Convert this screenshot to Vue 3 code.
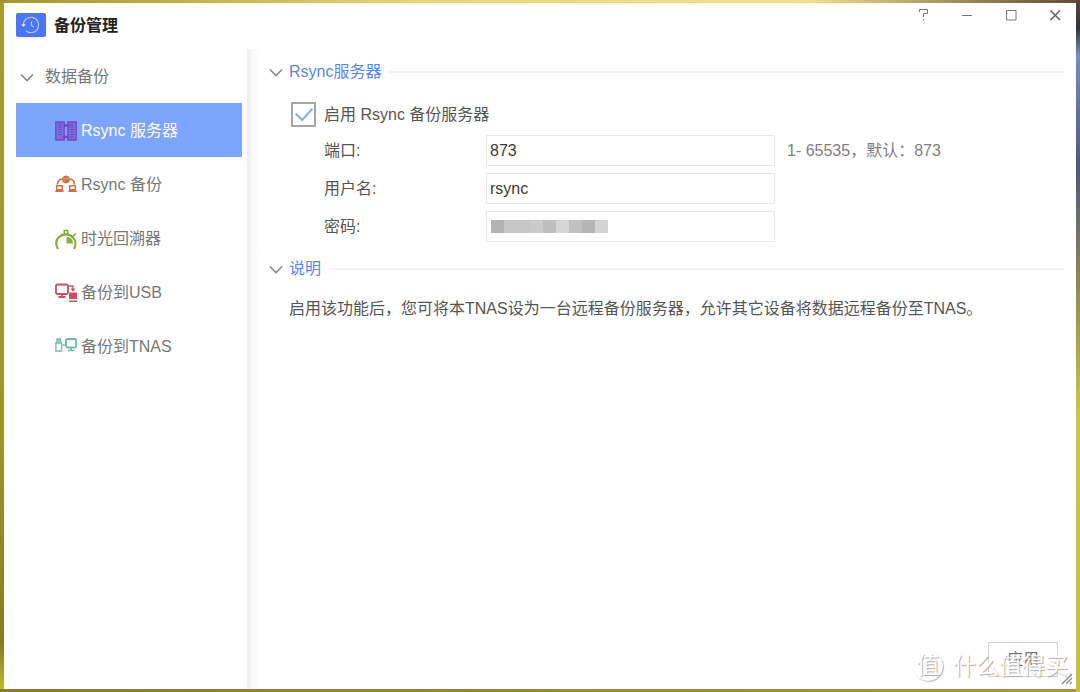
<script setup>
import { ref } from 'vue'

const items = [
  { id: 'server', label: 'Rsync 服务器' },
  { id: 'rsync', label: 'Rsync 备份' },
  { id: 'time', label: '时光回溯器' },
  { id: 'usb', label: '备份到USB' },
  { id: 'tnas', label: '备份到TNAS' },
]
const active = ref('server')
const enabled = ref(true)
const port = ref('873')
const user = ref('rsync')
const password = ref('')
</script>

<template>
  <div class="desktop">
    <div class="window">
      <header class="titlebar">
        <svg class="app-icon" viewBox="0 0 30 24" aria-hidden="true">
          <rect width="30" height="24" rx="2" fill="#4b75f8" />
          <path d="M7.3 12.500a7.700 7.700 0 1 1 2.500 5.200M15.500 8.500v4l2.500 1.500" fill="none" stroke="#c3d1ff" stroke-width="1.1" />
          <path d="M5.300 11.300h4.400l-2.200 2.700z" fill="#eef2ff" />
        </svg>
        <h1>备份管理</h1>
        <div class="controls">
          <button type="button" aria-label="帮助">
            <svg viewBox="0 0 14 14"><path d="M2.500 4V1.500h8v4H6.500v3.500M6.500 11v1.500" /></svg>
          </button>
          <button type="button" aria-label="最小化">
            <svg viewBox="0 0 14 14"><path d="M1 7.500h10" /></svg>
          </button>
          <button type="button" aria-label="最大化">
            <svg viewBox="0 0 14 14"><path d="M1.500 2.500h9.500v9.500h-9.500z" /></svg>
          </button>
          <button type="button" aria-label="关闭">
            <svg viewBox="0 0 14 14"><path d="M1.500 2.500l9.500 9.500M11 2.500l-9.500 9.500" class="heavy" /></svg>
          </button>
        </div>
      </header>

      <div class="body">
        <nav class="sidebar">
          <div class="group">
            <svg class="chevron" viewBox="0 0 14 14"><path d="M1 4.5l6 6 6-6" /></svg>
            <span>数据备份</span>
          </div>
          <button
            v-for="item in items"
            :key="item.id"
            type="button"
            class="item"
            :class="{ active: item.id === active }"
            @click="active = item.id"
          >
            <svg class="item-icon" viewBox="0 0 22 20" aria-hidden="true">
              <g v-if="item.id === 'server'" fill="none" stroke="#7544c4">
                <path d="M.8 1h8.400v18H.8zM12.800 1h8.400v18h-8.400z" fill="#7b6fe0" stroke-width="1.300" />
                <path d="M3 6h4M3 8.500h4M3 11h4M3 13.500h3M15 6h4M15 8.500h4M15 11h4M15 13.500h4M15 16h4" stroke-width="1.200" />
                <path d="M3.500 3.500h3M15 3.500h3" stroke-width="1.500" />
                <path d="M10 4.500h4v2M7.500 16h5v-3" stroke-width="1.300" />
                <path d="M9.500 3l3 1.500-3 1.500zM9 14.500v3L12 16z" fill="#7544c4" />
              </g>
              <g v-else-if="item.id === 'rsync'" fill="none" stroke="#ce7144">
                <circle cx="11" cy="4.500" r="3.500" fill="#ce7144" />
                <path d="M8 4l6-1M8.500 6.500l5-4" stroke="#e6a382" stroke-width=".7" />
                <path d="M7 4C4 4.500 2.500 6 2.500 9.500M15 4c3 .5 4.500 2 4.500 5.500" stroke-width="1.600" />
                <path d="M1.700 10.700h5.600v4H1.700zM14.700 10.700h5.600v4h-5.600zM.2 16.200h8.400M13.400 16.200h8.400" stroke-width="1.400" />
              </g>
              <g v-else-if="item.id === 'time'" fill="none" stroke="#83b03b">
                <path d="M3 20C.6 16.500.5 11.500 3.500 8.500A10 10 0 0 1 18 8.500C21.200 11.800 21 16.500 18.800 20" stroke-width="2.200" />
                <path d="M9.300 1.500h3.400v3.800H9.300zM17.800 7.500l3-3" stroke-width="1.600" />
                <path d="M11.500 8v6.500H18C18 10.500 15.500 8 11.500 8z" fill="#83b03b" stroke="none" />
              </g>
              <g v-else-if="item.id === 'usb'" fill="none" stroke="#c25361">
                <rect x="1" y="1.500" width="12" height="9.500" rx="1.500" stroke-width="1.800" />
                <path d="M7 11v3M3.500 14h7" stroke-width="1.800" />
                <path d="M14 3h4V8" stroke-width="1.300" />
                <path d="M15.500 5.500h5L18 8.500zM14 9.500h8v6.500h-8zM14 17.500h8v1.500h-8z" fill="#c25361" stroke="none" />
              </g>
              <g v-else fill="none" stroke="#74bda5">
                <path d="M.9 6h5.700v8H.9zM2 6V2h3.500v4" stroke-width="1.400" />
                <path d="M2 4h3.500M7.500 8H10" stroke-width="1.500" />
                <rect x="11" y="2" width="10.200" height="8.500" rx="1.500" stroke-width="1.900" />
                <path d="M16 10.500v2.500M13 13.500h6.500" stroke-width="1.700" />
              </g>
            </svg>
            <span>{{ item.label }}</span>
          </button>
        </nav>

        <main class="content">
          <section>
            <h2>
              <svg class="chevron" viewBox="0 0 14 14"><path d="M1 4.5l6 6 6-6" /></svg>
              <span>Rsync服务器</span>
            </h2>
            <form class="form" @submit.prevent>
              <label class="check">
                <input v-model="enabled" type="checkbox" />
                <span>启用 Rsync 备份服务器</span>
              </label>
              <div class="row">
                <label for="port">端口:</label>
                <input id="port" v-model="port" type="text" />
                <span class="hint">1- 65535，默认：873</span>
              </div>
              <div class="row">
                <label for="user">用户名:</label>
                <input id="user" v-model="user" type="text" />
              </div>
              <div class="row">
                <label for="password">密码:</label>
                <div class="secret">
                  <input id="password" v-model="password" type="password" />
                  <span class="mosaic"></span>
                </div>
              </div>
            </form>
          </section>
          <section>
            <h2>
              <svg class="chevron" viewBox="0 0 14 14"><path d="M1 4.5l6 6 6-6" /></svg>
              <span>说明</span>
            </h2>
            <p>启用该功能后，您可将本TNAS设为一台远程备份服务器，允许其它设备将数据远程备份至TNAS。</p>
          </section>
          <footer>
            <button type="button" class="apply">应用</button>
          </footer>
        </main>
      </div>

      <div class="watermark"><span class="seal">值</span><span>什么值得买</span></div>
      <svg class="grip" viewBox="0 0 12 12" aria-hidden="true"><path d="M1 11L11 1M5 11l6-6M9 11l2-2" /></svg>
    </div>
  </div>
</template>

<style>
body {
  margin: 0;
}
</style>

<style scoped>
* {
  box-sizing: border-box;
}
.desktop {
  display: flex;
  min-height: 100vh;
  padding: 3px 4px;
  background:
    linear-gradient(#5a4636, #30343c 4%, #6f8fc8 8%, #4a5a80 24%, #8d8450 40%, #cfc545 60%, #c8bd3c) right / 4px 100% no-repeat,
    linear-gradient(90deg, #a3962f, #e6d977 40%, #efe08a 75%, #5d4a38) top / 100% 3px no-repeat,
    linear-gradient(90deg, #8a7b26, #a39a35) bottom / 100% 3px no-repeat,
    linear-gradient(#a89b30, #a3942a 62%, #8a7b22 93%, #c3bb35);
  font: 16px/24px "Liberation Sans", "Noto Sans CJK SC", sans-serif;
  color: #555;
}
button,
input {
  font: inherit;
  color: inherit;
}
.window {
  position: relative;
  display: flex;
  flex: 1;
  flex-direction: column;
  background: #fff;
}
.titlebar {
  display: flex;
  height: 46px;
  padding-left: 12px;
}
.app-icon {
  width: 30px;
  height: 24px;
  margin-top: 10px;
}
h1 {
  margin: 11px 0 0 8px;
  font-size: 16px;
  line-height: 24px;
  color: #222;
}
.controls {
  display: flex;
  gap: 16px;
  margin: 0 6px 0 auto;
}
.controls button {
  width: 28px;
  height: 24px;
  padding: 0;
  border: 0;
  background: none;
}
.controls svg {
  display: block;
  width: 14px;
  height: 14px;
  margin: 0 auto;
}
.controls path {
  fill: none;
  stroke: #777;
}
.controls .heavy {
  stroke: #666;
  stroke-width: 1.6;
}
.body {
  display: flex;
  flex: 1;
}
.sidebar {
  width: 243px;
  padding: 16px 5px 0 12px;
  color: #777;
}
.group {
  display: flex;
  align-items: center;
  gap: 11px;
  height: 24px;
  margin-bottom: 14px;
  padding-left: 4px;
}
.chevron {
  flex: none;
  width: 14px;
  height: 14px;
}
.chevron path {
  fill: none;
  stroke: #888;
  stroke-width: 1.6;
}
.item {
  display: flex;
  align-items: center;
  gap: 4px;
  width: 100%;
  height: 54px;
  padding: 2px 0 0 39px;
  border: 0;
  background: none;
}
.item.active {
  background: #7da5fe;
  color: #fff;
}
.item-icon {
  width: 22px;
  height: 20px;
}
.content {
  display: flex;
  flex: 1;
  flex-direction: column;
  padding: 11px 12px 12px 22px;
  background: linear-gradient(90deg, #ececec, #f6f6f6 4px, #fcfcfc 9px, #fff 13px);
}
h2 {
  display: flex;
  align-items: center;
  gap: 6px;
  margin: 0;
  font-size: 16px;
  font-weight: 400;
  line-height: 24px;
  color: #5a86ea;
}
h2::after {
  flex: 1;
  height: 2px;
  margin-left: 2px;
  background: #f2f2f2;
  content: "";
}
.form {
  display: flex;
  flex-direction: column;
  gap: 7px;
  margin: 17px 0 15px;
  padding-left: 22px;
}
.check {
  display: flex;
  align-items: center;
  gap: 8px;
  height: 27px;
}
.check input {
  display: grid;
  width: 25px;
  height: 25px;
  margin: 0;
  border: 2px solid #a6a6a6;
  appearance: none;
  place-items: center;
}
.check input:checked::after {
  width: 8px;
  height: 14px;
  margin-bottom: 5px;
  border: solid #8fabe2;
  border-width: 0 2px 2px 0;
  transform: rotate(42deg);
  content: "";
}
.row {
  display: flex;
  align-items: center;
  height: 31px;
}
.row label {
  width: 162px;
  margin-left: 33px;
}
.row input {
  width: 289px;
  height: 31px;
  padding: 0 3px;
  border: 1px solid #e8e8e8;
  background: #fff;
  color: #3c3c3c;
}
.hint {
  margin-left: 12px;
  color: #808080;
}
.secret {
  position: relative;
}
.mosaic {
  position: absolute;
  top: 9px;
  left: 5px;
  width: 117px;
  height: 13px;
  background: linear-gradient(90deg, #b3b3b3 13px, #c7c7c7 13px 39px, #cbcbcb 39px 52px, #bebebe 52px 65px, #d6d6d6 65px 78px, #c1c1c1 78px 91px, #b5b5b5 91px 104px, #d3d3d3 104px);
}
p {
  margin: 16px 0 0 20px;
}
footer {
  display: flex;
  justify-content: flex-end;
  margin-top: auto;
  padding-right: 6px;
}
.apply {
  width: 70px;
  height: 35px;
  padding: 0;
  border: 1px solid #d4d4d4;
  background: #fff;
  color: #777;
}
.watermark {
  position: absolute;
  right: 8px;
  bottom: 7px;
  display: flex;
  align-items: center;
  gap: 10px;
  font-size: 23px;
  line-height: 32px;
  color: #fff;
  text-shadow: 1px 1px 1px #aaa;
  pointer-events: none;
}
.seal {
  width: 30px;
  height: 30px;
  border-radius: 50%;
  box-shadow: 1px 1px 1px #bbb;
  line-height: 29px;
  text-align: center;
}
.grip {
  position: absolute;
  right: 3px;
  bottom: 4px;
  width: 12px;
  height: 12px;
}
.grip path {
  fill: none;
  stroke: #888;
  stroke-width: 1.4;
}
</style>
